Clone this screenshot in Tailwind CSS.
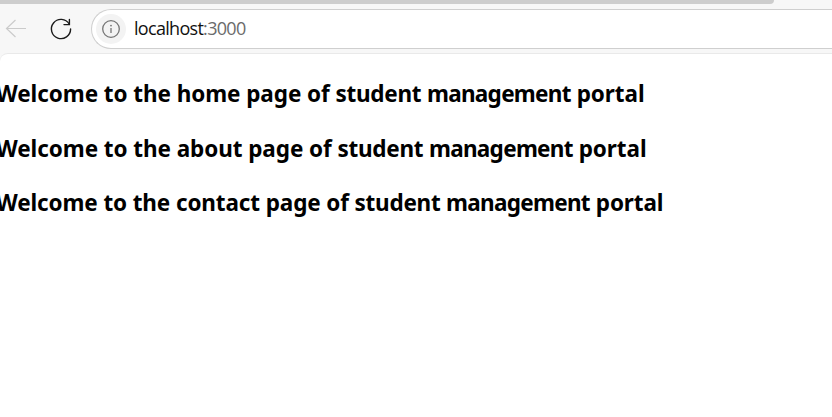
<!DOCTYPE html>
<html lang="en">
<head>
<meta charset="utf-8">
<title>localhost:3000</title>
<script src="https://cdn.jsdelivr.net/npm/@tailwindcss/browser@4"></script>
</head>
<body class="w-[832px] h-[417px] overflow-hidden bg-[#f7f7f7] font-['Noto_Sans','Open_Sans',sans-serif] flex flex-col">
  <div class="h-[4px] w-[774px] shrink-0 bg-[#cdcdcd] rounded-br-[6px]"></div>
  <header class="h-[49px] shrink-0 flex items-start pt-[5px]">
    <svg class="w-[91px] h-[40px] shrink-0" viewBox="0 9 91 40" fill="none">
      <path d="M26 28.5H6.5M15.5 20L6.5 28.5L15.5 37" stroke="#cbcbcb" stroke-width="1.2"/>
      <path d="M69.2 24A9.6 9.6 0 1 0 70.6 29" stroke="#1b1b1b" stroke-width="1.4" stroke-linecap="round"/>
      <path d="M69.4 19.5V24.6H64" stroke="#1b1b1b" stroke-width="1.4" stroke-linecap="round"/>
    </svg>
    <div class="flex-1 h-[40px] bg-white border border-r-0 border-[#cfcfcf] rounded-l-full flex items-center pl-[4px]">
      <div class="size-[30px] rounded-full bg-[#f3f3f3] flex items-center justify-center">
        <svg class="size-[20px]" viewBox="0 0 20 20" fill="none">
          <circle cx="10" cy="10" r="8.3" stroke="#757575" stroke-width="1.3"/>
          <path d="M10 9V14" stroke="#757575" stroke-width="1.3"/>
          <circle cx="10" cy="6.6" r=".9" fill="#757575"/>
        </svg>
      </div>
      <div class="ml-[8px] pb-[2px] font-['Open_Sans','Noto_Sans',sans-serif] text-[18px] leading-[24px] tracking-[-0.7px] text-[#111] whitespace-nowrap">localhost<span class="text-[#6b6b6b]">:3000</span></div>
    </div>
  </header>
  <main class="flex-1 bg-white border-t border-[#e9e9e9] rounded-tl-[8px] pt-[24px] flex flex-col gap-[22.5px] text-[22.5px] leading-[32px] font-bold text-black whitespace-nowrap">
    <h1 class="-ml-[4px] tracking-[-0.07px]">Welcome to the home page of <span class="tracking-[-0.27px]">student </span><span class="tracking-[-0.7px]">management<span class="tracking-normal"> </span></span>portal</h1>
    <h1 class="-ml-[4px] tracking-[-0.07px]">Welcome to the about page of <span class="tracking-[-0.27px]">student </span><span class="tracking-[-0.7px]">management<span class="tracking-normal"> </span></span>portal</h1>
    <h1 class="-ml-[4px] tracking-[-0.12px]">Welcome to the contact page of <span class="tracking-[-0.27px]">student </span><span class="tracking-[-0.7px]">management<span class="tracking-normal"> </span></span>portal</h1>
  </main>
</body>
</html>
